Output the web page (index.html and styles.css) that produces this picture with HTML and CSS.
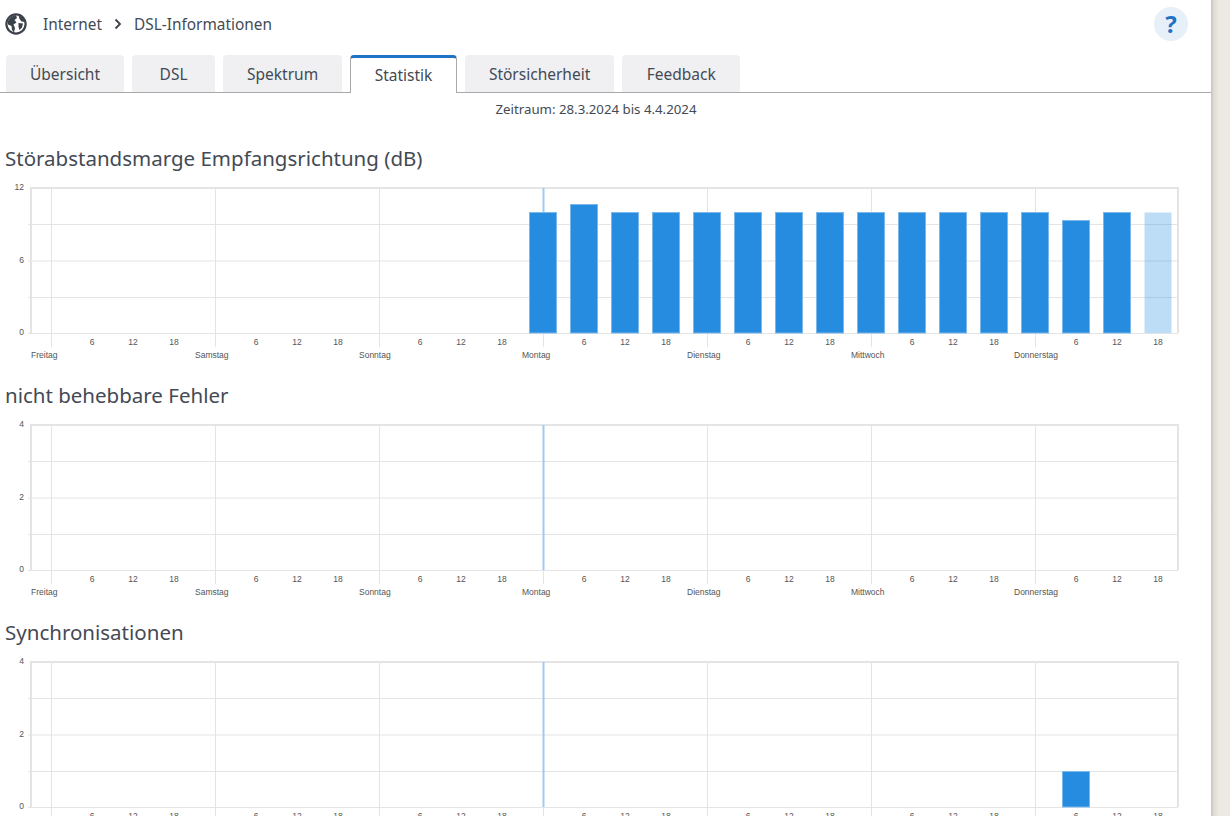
FILE: index.html
```html
<!DOCTYPE html>
<html lang="de">
<head>
<meta charset="utf-8">
<title>DSL-Informationen</title>
<link rel="stylesheet" href="styles.css">
</head>
<body>
<main class="page">
  <header class="top">
    <nav class="crumbs">
      <svg class="globe" width="24" height="24" viewBox="0 0 24 24"><circle cx="12" cy="12" r="9.6" fill="#fff" stroke="#3c424b" stroke-width="2.2"/><path d="M3.5 9.5 L7 4.8 L12 3 L13 6 L10.5 8 L12.5 10.5 L9.5 12.5 L11 16 L10 20.5 L8 18 L7.5 14 L4 12.5Z" fill="#3c424b"/><path d="M14.5 3.5 L19 5.5 L21 10 L17.5 9.5 L15.5 7Z M14.5 11 L19 11.5 L18 15.5 L15.5 18 L14.5 15Z" fill="#3c424b"/></svg>
      <span class="crumb">Internet</span>
      <svg class="chev" width="10" height="12" viewBox="0 0 10 12"><path d="M2.5 1.5 L7 6 L2.5 10.5" fill="none" stroke="#3c424b" stroke-width="1.8"/></svg>
      <span class="crumb">DSL-Informationen</span>
    </nav>
    <span class="help">?</span>
  </header>
  <div class="tabs">
    <span class="tab">Übersicht</span>
    <span class="tab">DSL</span>
    <span class="tab">Spektrum</span>
    <span class="tab active">Statistik</span>
    <span class="tab">Störsicherheit</span>
    <span class="tab">Feedback</span>
  </div>
  <p class="period">Zeitraum: 28.3.2024 bis 4.4.2024</p>

  <section class="panel">
    <h2 class="title">Störabstandsmarge Empfangsrichtung (dB)</h2>
    <svg class="chart" width="1211" height="185" viewBox="0 0 1211 185">
      <defs>
        <g id="grid">
          <path class="line" d="M28 44.5H1178M28 81H1178M28 117.5H1178M28 153.5H1178"/>
          <path class="line" d="M51.5 8V167M215.5 8V167M379.5 8V167M707.5 8V167M871.5 8V167M1035.5 8V167M543.5 153V167"/>
          <path class="frame" d="M31 153V8H1178V153"/>
          <path class="now" d="M543.5 8V153"/>
        </g>
      </defs>
      <use href="#grid"/>
      <rect class="bar" x="529.5" y="32.5" width="27" height="120.5"/>
      <rect class="bar" x="570.5" y="24.5" width="27" height="128.5"/>
      <rect class="bar" x="611.5" y="32.5" width="27" height="120.5"/>
      <rect class="bar" x="652.5" y="32.5" width="27" height="120.5"/>
      <rect class="bar" x="693.5" y="32.5" width="27" height="120.5"/>
      <rect class="bar" x="734.5" y="32.5" width="27" height="120.5"/>
      <rect class="bar" x="775.5" y="32.5" width="27" height="120.5"/>
      <rect class="bar" x="816.5" y="32.5" width="27" height="120.5"/>
      <rect class="bar" x="857.5" y="32.5" width="27" height="120.5"/>
      <rect class="bar" x="898.5" y="32.5" width="27" height="120.5"/>
      <rect class="bar" x="939.5" y="32.5" width="27" height="120.5"/>
      <rect class="bar" x="980.5" y="32.5" width="27" height="120.5"/>
      <rect class="bar" x="1021.5" y="32.5" width="27" height="120.5"/>
      <rect class="bar" x="1062.5" y="40.5" width="27" height="112.5"/>
      <rect class="bar" x="1103.5" y="32.5" width="27" height="120.5"/>
      <rect class="bar pale" x="1144.5" y="32.5" width="27" height="120.5"/>
      <g class="ylabels"><text x="24" y="10">12</text><text x="24" y="83">6</text><text x="24" y="155">0</text></g>
      <g class="hours"><text x="92" y="165">6</text><text x="133" y="165">12</text><text x="174" y="165">18</text><text x="256" y="165">6</text><text x="297" y="165">12</text><text x="338" y="165">18</text><text x="420" y="165">6</text><text x="461" y="165">12</text><text x="502" y="165">18</text><text x="584" y="165">6</text><text x="625" y="165">12</text><text x="666" y="165">18</text><text x="748" y="165">6</text><text x="789" y="165">12</text><text x="830" y="165">18</text><text x="912" y="165">6</text><text x="953" y="165">12</text><text x="994" y="165">18</text><text x="1076" y="165">6</text><text x="1117" y="165">12</text><text x="1158" y="165">18</text></g>
      <g class="days"><text x="31" y="178">Freitag</text><text x="195" y="178">Samstag</text><text x="359" y="178">Sonntag</text><text x="522" y="178">Montag</text><text x="687" y="178">Dienstag</text><text x="851" y="178">Mittwoch</text><text x="1014" y="178">Donnerstag</text></g>
    </svg>
  </section>

  <section class="panel">
    <h2 class="title">nicht behebbare Fehler</h2>
    <svg class="chart" width="1211" height="185" viewBox="0 0 1211 185">
      <use href="#grid"/>
      <g class="ylabels"><text x="24" y="10">4</text><text x="24" y="83">2</text><text x="24" y="155">0</text></g>
      <g class="hours"><text x="92" y="165">6</text><text x="133" y="165">12</text><text x="174" y="165">18</text><text x="256" y="165">6</text><text x="297" y="165">12</text><text x="338" y="165">18</text><text x="420" y="165">6</text><text x="461" y="165">12</text><text x="502" y="165">18</text><text x="584" y="165">6</text><text x="625" y="165">12</text><text x="666" y="165">18</text><text x="748" y="165">6</text><text x="789" y="165">12</text><text x="830" y="165">18</text><text x="912" y="165">6</text><text x="953" y="165">12</text><text x="994" y="165">18</text><text x="1076" y="165">6</text><text x="1117" y="165">12</text><text x="1158" y="165">18</text></g>
      <g class="days"><text x="31" y="178">Freitag</text><text x="195" y="178">Samstag</text><text x="359" y="178">Sonntag</text><text x="522" y="178">Montag</text><text x="687" y="178">Dienstag</text><text x="851" y="178">Mittwoch</text><text x="1014" y="178">Donnerstag</text></g>
    </svg>
  </section>

  <section class="panel">
    <h2 class="title">Synchronisationen</h2>
    <svg class="chart" width="1211" height="185" viewBox="0 0 1211 185">
      <use href="#grid"/>
      <rect class="bar" x="1062.5" y="117.5" width="27" height="35.5"/>
      <g class="ylabels"><text x="24" y="10">4</text><text x="24" y="83">2</text><text x="24" y="155">0</text></g>
      <g class="hours"><text x="92" y="165">6</text><text x="133" y="165">12</text><text x="174" y="165">18</text><text x="256" y="165">6</text><text x="297" y="165">12</text><text x="338" y="165">18</text><text x="420" y="165">6</text><text x="461" y="165">12</text><text x="502" y="165">18</text><text x="584" y="165">6</text><text x="625" y="165">12</text><text x="666" y="165">18</text><text x="748" y="165">6</text><text x="789" y="165">12</text><text x="830" y="165">18</text><text x="912" y="165">6</text><text x="953" y="165">12</text><text x="994" y="165">18</text><text x="1076" y="165">6</text><text x="1117" y="165">12</text><text x="1158" y="165">18</text></g>
    </svg>
  </section>
</main>
<div class="gutter"></div>
</body>
</html>
```

FILE: styles.css
```css
html, body {
  margin: 0;
  height: 100%;
  overflow: hidden;
}
body {
  display: flex;
  background: #fff;
  color: #444a54;
  font-family: "Noto Sans", "Liberation Sans", sans-serif;
}
.page {
  width: 1211px;
  flex: none;
  height: 816px;
  overflow: hidden;
  display: flex;
  flex-direction: column;
}
.gutter {
  flex: 1;
  background: linear-gradient(90deg, #c5c3bb 0, #dedcd4 3px, #eceae3 8px, #eceae3 100%);
}
.top {
  height: 55px;
  flex: none;
  display: flex;
  justify-content: space-between;
  padding: 7px 23px 0 4px;
  box-sizing: border-box;
}
.crumbs {
  display: flex;
  align-items: center;
  height: 34px;
  font-size: 15.4px;
}
.globe { margin-right: 15px; }
.chev { margin: 0 11px; }
.help {
  width: 34px;
  height: 34px;
  border-radius: 50%;
  background: #e7f0f9;
  color: #1f72c4;
  font-size: 24px;
  font-weight: 700;
  line-height: 34px;
  text-align: center;
}
.tabs {
  flex: none;
  display: flex;
  gap: 8px;
  height: 38px;
  box-sizing: border-box;
  padding-left: 6px;
  border-bottom: 1px solid #a9a9a9;
}
.tab {
  box-sizing: border-box;
  height: 37px;
  min-width: 83px;
  padding: 0 24px;
  line-height: 38px;
  font-size: 15.5px;
  text-align: center;
  background: #f0f0f2;
  border-radius: 4px 4px 0 0;
}
.tab:last-child { min-width: 118px; }
.tab.active {
  height: 38px;
  padding: 0 23.5px;
  background: #fff;
  border: 1px solid #a9a9a9;
  border-top: 3px solid #1f72c4;
  border-bottom: 0;
  line-height: 34px;
}
.period {
  flex: none;
  margin: 0;
  height: 35px;
  padding-right: 19px;
  text-align: center;
  font-size: 13.25px;
  line-height: 33px;
}
.panel {
  flex: none;
  height: 237px;
  margin: 0;
}
.title {
  margin: 0;
  height: 52px;
  padding-left: 5px;
  font-size: 20.5px;
  font-weight: 400;
  line-height: 60px;
  box-sizing: border-box;
}
.chart { display: block; }
.line { stroke: #e4e4e4; stroke-width: 1; fill: none; }
.frame { stroke: #e4e4e4; stroke-width: 2; fill: none; }
.now { stroke: #a0cbee; stroke-width: 2; fill: none; }
.bar { fill: #268ce0; stroke: #7db8ea; stroke-width: 1; }
.bar.pale { fill: rgba(38, 140, 224, 0.3); stroke: none; }
.ylabels text, .hours text, .days text {
  font-family: "Liberation Sans", Arial, sans-serif;
  font-size: 8.5px;
  fill: #555;
}
.ylabels text { text-anchor: end; }
.hours text { text-anchor: middle; }
```
